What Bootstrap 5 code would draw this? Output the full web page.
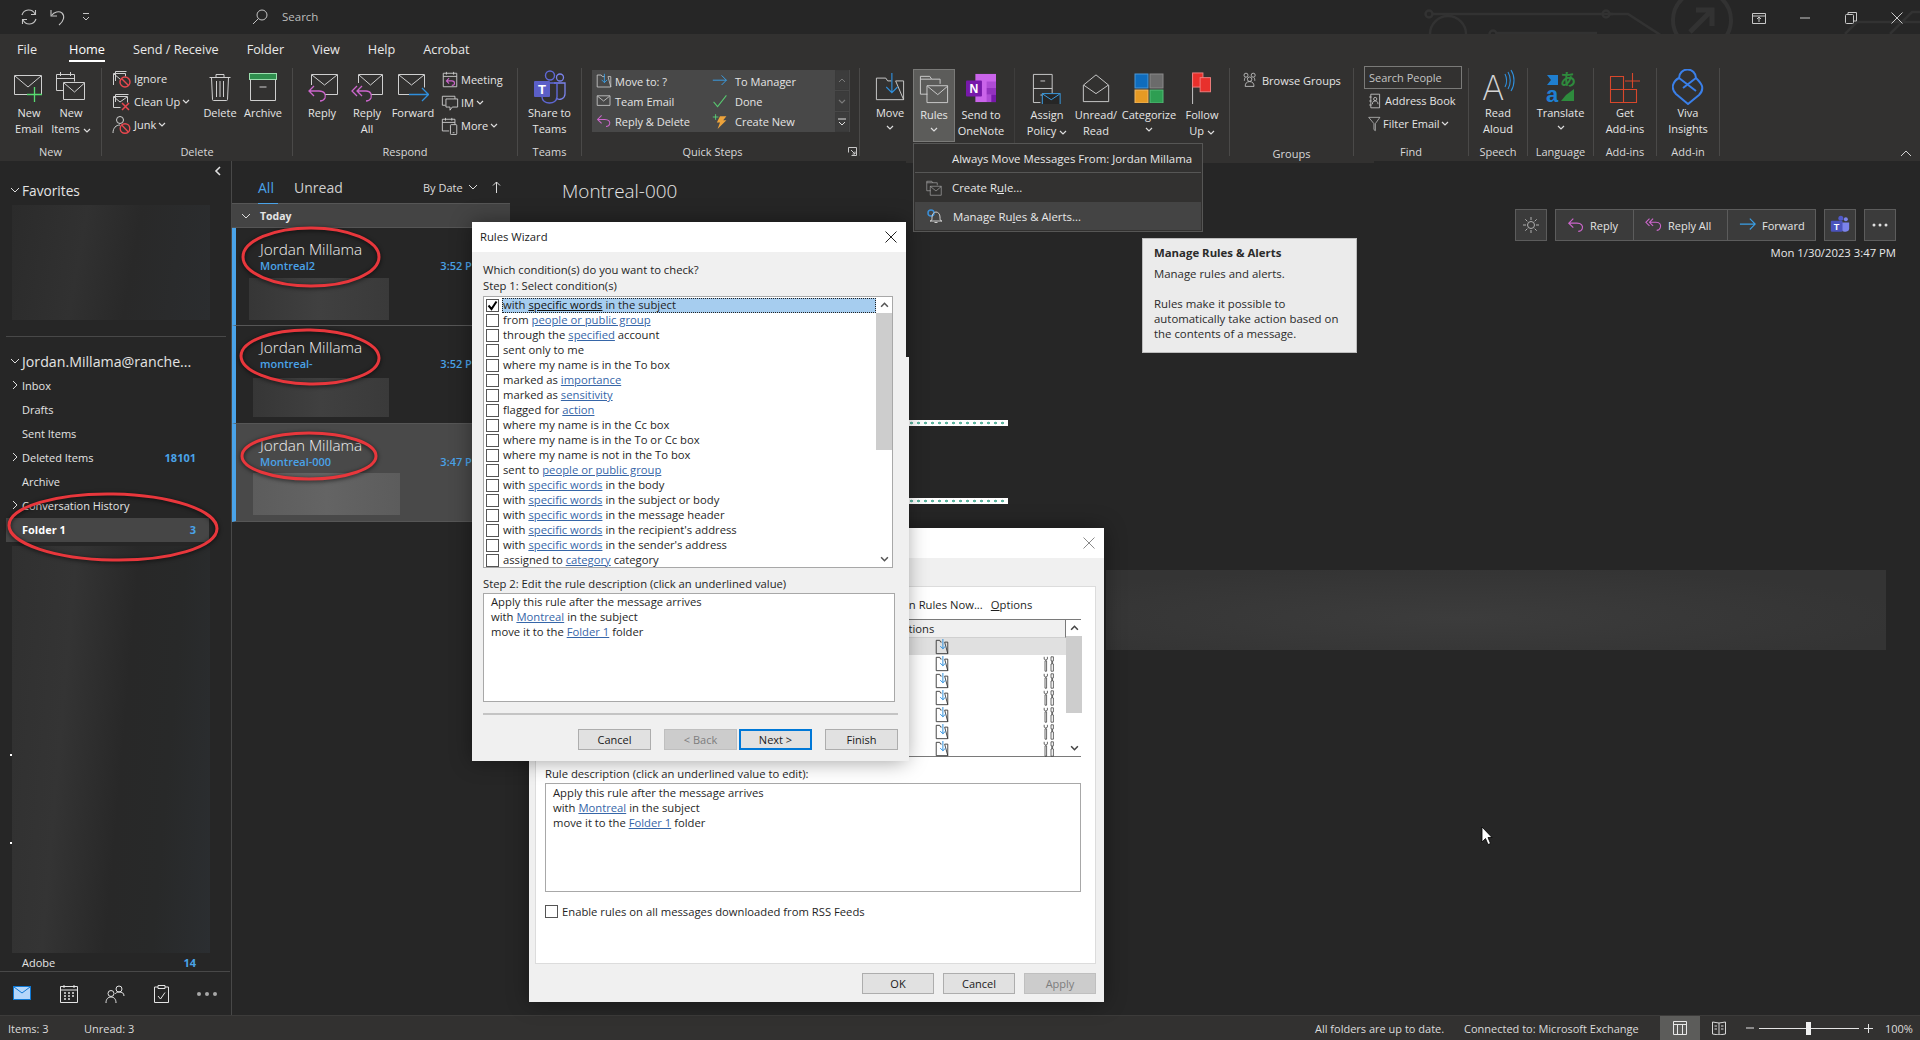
<!DOCTYPE html>
<html lang="en">
<head>
<meta charset="UTF-8">
<title>Outlook Rules Wizard</title>
<link rel="stylesheet" href="https://cdn.jsdelivr.net/npm/bootstrap@5.3.0/dist/css/bootstrap.min.css">
<style>
    html, body { height: 100%; overflow: hidden; }
    body { background: #262626; color: #e4e4e4; font-family: "Open Sans", "Liberation Sans", sans-serif; font-size: 11px; line-height: 15px; }
    .app { width: 1920px; height: 1040px; position: relative; overflow: hidden; }

    /* title bar */
    .titlebar { height: 34px; background: #262626; position: relative; flex: none; padding-bottom: 1px; }
    .circuit { position: absolute; left: 1420px; top: 0; }
    .tb-refresh { margin-left: 20px; }
    .tb-undo { margin-left: 11px; }
    .tb-drop { margin-left: 14px; }
    .tb-lens { margin-left: 160px; }
    .tb-search { width: 60px; margin-left: 13px; color: #bdbdbd; font-size: 11.5px; }
    .winctl { width: 46px; text-align: center; }

    /* ribbon */
    .ribbon { height: 127px; background: #323130; flex: none; position: relative; }
    .tabs { height: 32px; padding-left: 17px; gap: 28px; font-size: 12.7px; color: #e8e8e8; }
    .tabs span { height: 32px; line-height: 30px; }
    .tab-file { margin-right: 4px; }
    .tab-on { color: #fff; position: relative; }
    .tab-on::after { content: ""; position: absolute; left: 0; right: 0; top: 26px; height: 2px; background: #fff; }
    .rowgroups { height: 88px; margin-top: 2px; }
    .rgroup { height: 88px; border-right: 1px solid #4a4948; flex: none; }
    .rlabel { height: 20px; line-height: 20px; margin-bottom: -6px; margin-top: auto; text-align: center; color: #d8d8d8; flex: none; }
    .rbody { height: 72px; flex: none; }
    .g-new { width: 102px; }
    .g-new .rbody { padding-left: 8px; }
    .g-del { width: 191px; }
    .g-del .rbody { padding-left: 10px; }
    .g-resp { width: 225px; }
    .g-resp .rbody { padding-left: 9px; }
    .g-teams { width: 64px; }
    .g-qs { width: 278px; }
    .g-qs .rbody { padding-left: 10px; }
    .g-move { width: 155px; border-right-color: #3e3d3c; }
    .g-move .rbody { padding-left: 8px; }
    .g-tags { width: 215px; }
    .g-tags .rbody { padding-left: 7px; }
    .g-grp { width: 124px; }
    .g-find { width: 115px; }
    .g-find .rbody { padding-left: 10px; }
    .g-speech { width: 59px; }
    .g-lang { width: 66px; }
    .g-addins { width: 63px; }
    .g-addin { width: 63px; }
    .bigb { display: flex; flex-direction: column; align-items: center; text-align: center; flex: none; line-height: 16px; color: #e6e6e6; }
    .bigb .ic { height: 37px; display: flex; align-items: center; justify-content: center; flex: none; }
    .bigb.lower .ic { height: 39px; }
    .w36 { width: 36px; } .w40 { width: 40px; } .w42 { width: 42px; } .w44 { width: 44px; }
    .w48 { width: 48px; } .w50 { width: 50px; } .w52 { width: 52px; } .w58 { width: 58px; } .wfull { width: 100%; }
    .smallcol { flex: none; }
    .smallcol > div { height: 23px; display: flex; align-items: center; gap: 2px; white-space: nowrap; color: #e6e6e6; }
    .col-del { width: 90px; margin-top: -1px; }
    .col-resp { margin-left: 7px; width: 76px; }
    .chev { flex: none; }
    .rules-on { margin-left: 1px; height: 73px; background: #5c5c5a; border: 1px solid #7a7a78; margin-top: 1px; }
    .bigb.rules-on .ic { height: 37px; }
    .qs-gal { width: 258px; height: 62px; background: #484848; margin-top: 2px; position: relative; }
    .qs-col { width: 119px; padding-top: 1px; }
    .qs-col2 { width: 119px; padding-top: 1px; }
    .qs-col > div, .qs-col2 > div { height: 20px; display: flex; align-items: center; gap: 3px; white-space: nowrap; }
    .qs-col > div { padding-left: 4px; }
    .qs-col2 > div { gap: 6px; }
    .qs-scroll { width: 14px; margin-left: 5px; gap: 1px; }
    .qs-scroll > div { flex: 1; background: #3c3c3c; border: 1px solid #3a3a3a; display: flex; align-items: center; justify-content: center; }
    .qs-label { padding-right: 16px; position: relative; }
    .launcher { position: absolute; right: 2px; top: 5px; }
    .browse { margin-top: 4px; gap: 4px; white-space: nowrap; padding-left: 12px; }
    .grp-label { margin-top: auto; margin-bottom: -8px; }
    .ppl { width: 98px; height: 21px; border: 1px solid #7a7a78; color: #c4c4c4; padding-left: 3px; line-height: 18px; margin-top: -2px; white-space: nowrap; }
    .find-rows > div { height: 23px; display: flex; align-items: center; gap: 1px; white-space: nowrap; padding-left: 4px; }
    .ribcollapse { margin-left: auto; margin-right: 8px; margin-top: 82px; }
    .ribbon-lip { position: absolute; left: 906px; top: 127px; width: 468px; height: 2px; background: #323130; z-index: 3; }

    /* rules dropdown and tooltip */
    .rules-menu { position: absolute; left: 913px; top: 143px; width: 290px; height: 89px; background: #323130; border: 1px solid #565655; z-index: 6; color: #e8e8e8; font-size: 11.4px; }
    .rules-menu .mi { display: flex; align-items: center; padding-left: 38px; }
    .mi svg { margin-left: -26px; margin-right: 10px; flex: none; }
    .mi-a { height: 29px; border-bottom: 1px solid #565655; margin: 0 1px; padding-left: 37px !important; }
    .mi-b { height: 29px; }
    .mi-c { height: 28px; background: #444; margin: 0 1px; }
    .tip { position: absolute; left: 1142px; top: 238px; width: 215px; height: 115px; background: #ebebeb; border: 1px solid #bdbdbd; color: #2a2a2a; padding: 6px 11px; z-index: 6; font-size: 11.4px; }
    .tip b { font-weight: 700; display: block; margin-bottom: 6px; }
    .tip p { margin: 0 0 15px; }

    /* main panes */
    .mainrow { flex: 1 1 auto; min-height: 0; position: relative; }
    .sidebar { width: 231px; flex: none; }
    .collapse-row { height: 20px; padding-right: 10px; }
    .fav-row { height: 20px; font-size: 13.7px; padding: 0 0 2px 22px; }
    .fav-row svg, .acct-row svg { margin-left: -12px; margin-right: 2px; flex: none; }
    .frow svg { margin-left: -10px; margin-right: 4px; flex: none; }
    .blur1 { height: 115px; margin: 4px 21px 0 12px; background: linear-gradient(100deg, #2b2b2b 0, #313131 35%, #292929 60%, #2b2d2f 100%); }
    .sidehr { height: 1px; background: #484848; margin: 16px 5px 13px 6px; }
    .acct-row { height: 24px; font-size: 14.2px; padding: 0 0 2px 22px; white-space: nowrap; }
    .frow { height: 24px; margin-left: 6px; width: 203px; padding: 0 13px 2px 16px; justify-content: space-between; font-size: 11px; }
    .frow-on { background: #464646; font-weight: 700; color: #fff; }
    .cnt { color: #4aa3e8; font-weight: 700; }
    .blur2 { height: 407px; margin: 4px 21px 0 12px; background: linear-gradient(95deg, #303030 0, #343434 28%, #282828 55%, #282929 75%, #2b2e31 100%); }
    .adobe-row { height: 18px; padding: 2px 35px 0 22px; justify-content: space-between; }
    .navbar-bottom { height: 44px; border-top: 1px solid #484848; margin-right: 1px; }
    .navbar-bottom > div { width: 46px; display: flex; justify-content: center; align-items: center; }

    .msglist { width: 279px; flex: none; border-left: 1px solid #484848; }
    .listhead { height: 43px; border-bottom: 1px solid #565656; padding: 10px 0 0 26px; position: relative; }
    .lt-all { color: #4aa3e8; font-size: 14px; position: relative; width: 36px; }
    .lt-all::after { content: ""; position: absolute; left: 0; width: 20px; top: 23px; height: 1px; background: #4aa3e8; }
    .lt-unread { font-size: 14px; color: #cfcfcf; width: 129px; }
    .lt-sort { color: #dcdcdc; width: 40px; white-space: nowrap; font-size: 11px; }
    .lt-caret { margin-left: 5px; }
    .lt-up { margin-left: 14px; }
    .today { height: 24px; background: #444; font-weight: 700; font-size: 10.5px; padding: 1px 0 0 9px; gap: 9px; border-bottom: 1px solid #555; }
    .mitem { height: 98px; border-left: 4px solid #4aa3e8; border-bottom: 1px solid #565656; padding: 11px 28px 0 24px; }
    .mitem-on { background: #494949; }
    .mname { font-size: 15.3px; line-height: 20px; color: #f0f0f0; font-weight: 300; }
    .msub { line-height: 14px; justify-content: space-between; color: #4aa3e8; font-weight: 600; }
    .mtime { font-weight: 600; }
    .mblur { background: linear-gradient(90deg, #363636, #404040 50%, #3a3a3a); }
    .mb1 { margin: 5px 0 0 -11px; width: 140px; height: 42px; }
    .mb2 { margin: 7px 0 0 -7px; width: 136px; height: 39px; }
    .mb3 { margin: 4px 0 0 -7px; width: 147px; height: 42px; background: linear-gradient(90deg, #5c5c5c, #646464 50%, #5c5c5c); }

    .reading { flex: 1 1 auto; min-width: 0; position: relative; }
    .subject { padding: 18px 0 0 52px; font-size: 18.9px; line-height: 24px; color: #e6e6e6; font-weight: 300; height: 48px; }
    .actions { height: 32px; padding-right: 24px; gap: 8px; justify-content: flex-end; }
    .actbtn { background: #3b3b3b; border: 1px solid #5c5c5c; height: 32px; display: flex; align-items: center; justify-content: center; }
    .actsq { width: 32px; }
    .actgrp { width: 261px; }
    .actgrp > div { display: flex; align-items: center; height: 30px; gap: 5px; color: #e4e4e4; padding-left: 11px; }
    .actgrp > div + div { border-left: 1px solid #5c5c5c; }
    .ag-r { width: 77px; } .ag-ra { width: 94px; } .ag-f { width: 88px; }
    .datel { text-align: right; padding: 4px 24px 0 0; line-height: 16px; height: 20px; color: #e8e8e8; font-size: 11.3px; }
    .strip { height: 6px; width: 198px; background: #fff radial-gradient(circle at 3.5px 3px, #5fb5a0 1.2px, transparent 1.6px) 0 0 / 7px 6px; margin-left: 300px; }
    .st1 { margin-top: 159px; }
    .st2 { margin-top: 72px; }
    .rbar { margin: 66px 0 0 596px; width: 780px; height: 80px; background: radial-gradient(ellipse at 45% 60%, #3c3c3c, #343434 75%); }

    /* status bar */
    .statusbar { height: 25px; background: #323130; flex: none; font-size: 11px; color: #dcdcdc; border-top: 1px solid #3c3b3a; }
    .sb-items { margin-left: 8px; width: 76px; }
    .sb-up { margin-left: auto; width: 149px; white-space: nowrap; }
    .sb-conn { width: 196px; white-space: nowrap; }
    .sb-view { width: 40px; height: 24px; background: #5c5c5a; display: flex; align-items: center; justify-content: center; }
    .sb-read { width: 38px; display: flex; justify-content: center; }
    .sb-zoom { width: 147px; gap: 5px; padding-left: 8px; }
    .zline { width: 100px; height: 1px; background: #e4e4e4; position: relative; }
    .zthumb { position: absolute; left: 47px; top: -6px; width: 5px; height: 13px; background: #f0f0f0; }
    .sb-pct { width: 35px; }

    /* windows dialogs */
    .dlg { position: absolute; background: #f0f0f0; color: #1f1f1f; font-size: 11.25px; line-height: 15px; box-shadow: 0 0 20px rgba(0, 0, 0, .4); }
    .dlg a { color: #3666a8; text-decoration: underline; }
    .dlg-title { height: 30px; background: #fff; padding: 0 9px 1px 8px; justify-content: space-between; color: #1a1a1a; }
    .wizard { left: 472px; top: 222px; width: 434px; height: 539px; z-index: 5; }
    .wizard::after { content: ""; position: absolute; left: 100%; top: 135px; bottom: 0; width: 3px; background: #f0f0f0; }
    .wiz-body { padding: 10px 11px 0; }
    .lh16 { line-height: 16px; }
    .mt-1px { margin-top: 1px; }
    .condbox { width: 410px; height: 272px; border: 1px solid #a8a8a8; background: #fff; margin-top: 2px; }
    .condrows { width: 392px; padding-top: 1px; flex: none; }
    .cond { height: 15px; display: flex; align-items: center; padding-left: 2px; white-space: nowrap; }
    .tick { width: 13px; height: 13px; border: 1px solid #555; background: #fff; flex: none; display: flex; align-items: center; justify-content: center; }
    .cond span { margin-left: 3px; padding: 0 1px; flex: 1; height: 15px; line-height: 14px; }
    .cond-on span { background: #a6cdef; outline: 1px dotted #222; outline-offset: -1px; }
    .cond-on a { color: #111; }
    .scrollb { width: 16px; flex: none; display: flex; flex-direction: column; background: #fff; }
    .sb-arrow { height: 16px; display: flex; align-items: center; justify-content: center; flex: none; }
    .thumb-a { height: 137px; background: #cdcdcd; flex: none; }
    .descbox { height: 109px; border: 1px solid #a8a8a8; background: #fff; padding: 0 7px; }
    .descbox div { height: 15px; }
    .wiz-sep { height: 2px; background: #c4c4c4; margin-top: 11px; width: 415px; }
    .btnrow { margin-top: 14px; width: 415px; justify-content: flex-end; }
    .btn.wbtn { width: 73px; height: 21px; padding: 0; border-radius: 0; background: #e1e1e1; border: 1px solid #adadad; color: #1a1a1a; font-size: 11px; line-height: 18px; }
    .btn.wbtn-off { background: #cccccc; border-color: #bfbfbf; color: #7d7d7d; }
    .btn.wbtn-def { border: 2px solid #0078d7; }
    .gap13 { margin-left: 13px !important; }
    .gap2 { margin-left: 2px !important; }
    .gap9 { margin-left: 9px !important; }

    .rulesdlg { left: 529px; top: 528px; width: 575px; height: 474px; z-index: 4; }
    .rd-panel { width: 561px; height: 378px; margin: 28px 0 0 6px; background: #fff; border: 1px solid #dcdcdc; padding: 10px 0 0 9px; }
    .rd-tools { height: 16px; line-height: 16px; white-space: nowrap; }
    .rd-run { margin-left: 350px; margin-right: 8px; }
    .rulelist { width: 536px; height: 138px; border: 1px solid #7a7a7a; margin-top: 6px; }
    .rl-main { width: 520px; flex: none; }
    .rl-head { height: 18px; background: #f0f0f0; border-bottom: 1px solid #d0d0d0; padding-left: 350px; line-height: 17px; border-right: 1px solid #7a7a7a; }
    .rl-row { height: 17px; display: flex; align-items: center; padding-left: 388px; overflow: hidden; }
    .rl-sel { background: #e0e0e0; }
    .rl-tool { margin-left: 92px; flex: none; }
    .thumb-b { height: 77px; background: #cdcdcd; flex: none; }
    .rd-lab { margin-top: 9px; line-height: 16px; }
    .rd-desc { width: 536px; margin-top: 1px; padding-top: 1px; }
    .rd-check { margin-top: 11px; height: 16px; gap: 4px; }
    .rd-btns { margin-top: 9px; padding-right: 8px; justify-content: flex-end; }
    .btn.wbtn-b { width: 72px; }

    .rings { position: absolute; left: 0; top: 0; z-index: 4; pointer-events: none; filter: drop-shadow(0 1px 2px rgba(0, 0, 0, .7)); }
    .mouse { position: absolute; left: 1481px; top: 826px; z-index: 7; }
    .speck { position: absolute; left: 10px; width: 2px; height: 2px; background: #fff; }
    .speck1 { top: 754px; } .speck2 { top: 842px; }
</style>
</head>
<body>

<svg width="0" height="0" class="d-block position-absolute">
<defs>
  <symbol id="i-newmail" viewBox="0 0 32 32" fill="none" stroke="#cfcfcf"><path d="M1.500 4.500h27v19h-27zM2 5l13 11L28 5"/><path d="M14 23.500h15M21.500 16v15" stroke="#58dc70" stroke-width="1.300"/></symbol>
  <symbol id="i-newitems" viewBox="0 0 32 32" fill="none" stroke="#cfcfcf"><path d="M8 19.500H1.500v-16h18v7M1.500 7.500h18M5.500 1v4M15.500 1v4"/><path d="M8.500 11.500h21v17h-21zM9 12l10.500 9 10-9"/></symbol>
  <symbol id="i-ignore" viewBox="0 0 20 20" fill="none" stroke="#cfcfcf"><path d="M3.500 12V2.500h11M1.500 16V4.500h12v3"/><path d="M2 5l6 5"/><circle cx="13" cy="13" r="5" stroke="#e8484f" stroke-width="1.400"/><path d="M9.500 9.500l7 7" stroke="#e8484f" stroke-width="1.400"/></symbol>
  <symbol id="i-cleanup" viewBox="0 0 20 20" fill="none" stroke="#cfcfcf"><path d="M3.500 10V2.500h13M1.500 15.500v-11h14v6M1.500 15.500h7M2 5l6 5 7-5"/><path d="M10 11l7 7M17 11l-7 7" stroke="#e8484f" stroke-width="1.500"/></symbol>
  <symbol id="i-junk" viewBox="0 0 20 20" fill="none" stroke="#cfcfcf"><circle cx="8" cy="5" r="3.500"/><path d="M1 18c0-5 3-8 7-8"/><circle cx="13" cy="13.500" r="4.800" stroke="#e8484f" stroke-width="1.400"/><path d="M9.700 10l6.600 7" stroke="#e8484f" stroke-width="1.400"/></symbol>
  <symbol id="i-trash" viewBox="0 0 32 32" fill="none" stroke="#cfcfcf"><path d="M5.500 6.500h21M12 6V3.500h8V6M7.500 6.500l1 22a1 1 0 0 0 1 1h13a1 1 0 0 0 1-1l1-22M12.500 10v16M16 10v16M19.500 10v16"/></symbol>
  <symbol id="i-archive" viewBox="0 0 32 32" fill="none"><rect x="2.500" y="2.500" width="27" height="6" fill="#2f8f4e" stroke="#9adfae"/><path d="M3.500 8.500v21h25v-21M12.500 16h7" stroke="#cfcfcf"/></symbol>
  <symbol id="i-reply" viewBox="0 0 32 32" fill="none"><path d="M5.500 14V3.500h26v20H19M6 4l12.500 10L31 4" stroke="#cfcfcf"/><path d="M8 15l-5 5 5 5M3 20h10c6 0 7 4 6 7-1 2-3 3-5 3" stroke="#cc66cc" stroke-width="1.300"/></symbol>
  <symbol id="i-replyall" viewBox="0 0 32 32" fill="none"><path d="M7.500 12V3.500h24v20H20M8 4l11.500 10L31 4" stroke="#cfcfcf"/><path d="M6 15l-5 5 5 5M11 15l-5 5 5 5M6 20h9c5 0 6 4 5 7-1 2-3 3-5 3" stroke="#cc66cc" stroke-width="1.300"/></symbol>
  <symbol id="i-forward" viewBox="0 0 32 32" fill="none"><path d="M12 23.500H1.500v-20h26v13M2 4l12.500 10L27 4" stroke="#cfcfcf"/><path d="M12 23.500h19M25 17l6.500 6.500L25 30" stroke="#2f8fdc" stroke-width="1.300"/></symbol>
  <symbol id="i-meeting" viewBox="0 0 20 20" fill="none"><path d="M2.500 2.500h15v15h-15zM2.500 6h15M6 1v3M14 1v3" stroke="#cfcfcf"/><path d="M9 8l-3 3 3 3M6 11h6c2 0 3 1 3 2.500S13.500 16 12 16" stroke="#cc66cc" stroke-width="1.200"/></symbol>
  <symbol id="i-im" viewBox="0 0 20 20" fill="none" stroke="#cfcfcf"><path d="M5 12.500H1.500v-10h14v3"/><path d="M5.500 5.500h13v9h-6L10 18v-3.500H5.500z"/></symbol>
  <symbol id="i-more" viewBox="0 0 20 20" fill="none" stroke="#cfcfcf"><path d="M9 15.500H1.500v-13h14v6M1.500 6h14M5 1v3M12 1v3"/><rect x="10.500" y="8.500" width="7" height="11" rx=".8"/><path d="M13 17.500h2"/></symbol>
  <symbol id="i-moveto" viewBox="0 0 20 20" fill="none"><path d="M1.500 17.500v-15h5l1.500 2h3M15 4.500h3.500v13z" stroke="#cfcfcf"/><path d="M1.500 17.500h17" stroke="#cfcfcf"/><path d="M10.500 1v11M7 8.500l3.500 3.500L14 8.500" stroke="#3aa0e8" stroke-width="1.100"/></symbol>
  <symbol id="i-env" viewBox="0 0 20 20" fill="none" stroke="#cfcfcf"><path d="M1.500 3.500h16v12h-16zM2 4l7.500 6L17 4"/></symbol>
  <symbol id="i-replysm" viewBox="0 0 20 20" fill="none" stroke="#cc66cc" stroke-width="1.300"><path d="M7 3L2 8l5 5M2 8h9c5 0 7 3 6 6-.6 2-2.500 3-4.500 3"/></symbol>
  <symbol id="i-forwardsm" viewBox="0 0 20 20" fill="none" stroke="#3aa0e8" stroke-width="1.200"><path d="M1 9h17M12 3l6 6-6 6"/></symbol>
  <symbol id="i-check" viewBox="0 0 20 20" fill="none" stroke="#58c870" stroke-width="1.300"><path d="M2 11l5 6L18 3"/></symbol>
  <symbol id="i-bolt" viewBox="0 0 20 20"><path d="M10 4h8l-4 5h4L7 20l3-8H6z" fill="#eda33b"/><path d="M1 5h7M4.500 1.500v7" stroke="#5ce07c" fill="none"/></symbol>
  <symbol id="i-move" viewBox="0 0 32 32" fill="none"><path d="M1.500 29.500v-23h10l2 3h4M22 9.500h8.500v20z" stroke="#cfcfcf"/><path d="M1.500 29.500h29" stroke="#cfcfcf"/><path d="M18 1v21M12 16l6 6 6-6" stroke="#2f8fdc" stroke-width="1.200"/></symbol>
  <symbol id="i-rules" viewBox="0 0 32 32" fill="none" stroke="#cfcfcf"><path d="M9 21.500H1.500v-19h10l2 3h9v5M1.500 5.500h12"/><path d="M8.500 12.500h22v18h-22zM9 13l11 9 10.500-9"/></symbol>
  <symbol id="i-policy" viewBox="0 0 32 32" fill="none"><path d="M9 31.500H1.500v-30h20v20M1.500 16.500h20M9 8.500h5M9 23.500h5" stroke="#cfcfcf"/><rect x="11" y="22" width="19" height="13" fill="#262626" stroke="#3aa0e8"/><path d="M11.500 22.500l9 6 9-6" stroke="#3aa0e8"/></symbol>
  <symbol id="i-unread" viewBox="0 0 32 32" fill="none" stroke="#cfcfcf"><path d="M2.500 13v17.500h27V13L16 2zM3 13l13 9 13-9"/></symbol>
  <symbol id="i-cat" viewBox="0 0 30 30"><rect x="1" y="1" width="13" height="14" fill="#0f6cbd" stroke="#4a98d8"/><rect x="16" y="1" width="13" height="14" fill="#6b6b6b" stroke="#8a8a8a"/><rect x="1" y="17" width="13" height="13" fill="#e69a24" stroke="#f0b864"/><rect x="16" y="17" width="13" height="13" fill="#2e9e52" stroke="#55bb77"/></symbol>
  <symbol id="i-flag" viewBox="0 0 30 34" fill="none"><path d="M5 2v32" stroke="#cfcfcf"/><rect x="5" y="1" width="11" height="15" fill="#e8302c" stroke="#f08080"/><rect x="13" y="6" width="11" height="15" fill="#e8302c" stroke="#f08080"/></symbol>
  <symbol id="i-people" viewBox="0 0 20 20" fill="none" stroke="#cfcfcf"><circle cx="5" cy="4" r="2.500"/><circle cx="14" cy="4" r="2.500"/><circle cx="9.500" cy="9" r="2.800"/><path d="M3 11c0-1 0-3 1-4M16 11c0-1 0-3-1-4M4 18c0-4 2-6 5.500-6s5.500 2 5.500 6z"/></symbol>
  <symbol id="i-book" viewBox="0 0 20 20" fill="none" stroke="#cfcfcf"><path d="M3.500 1.500h11v17h-11zM1.500 5h3M1.500 10h3M1.500 15h3"/><circle cx="9" cy="7.500" r="2"/><path d="M5.500 14c0-3 1.500-4 3.500-4s3.500 1 3.500 4"/></symbol>
  <symbol id="i-filter" viewBox="0 0 20 22" fill="none" stroke="#cfcfcf"><path d="M1 1.500h16l-6.500 9v10l-2-1.500v-8.500z"/></symbol>
  <symbol id="i-addins" viewBox="0 0 32 36" fill="none"><path d="M1.500 7.500h13v13h13v13h-26zM1.500 20.500h13v13" stroke="#d8472b" stroke-width="1.100"/><path d="M16 12h15M23.500 4v15" stroke="#d8472b" stroke-width="1.100"/></symbol>
  <symbol id="i-viva" viewBox="0 0 32 36" fill="none" stroke="#3a7fe8" stroke-width="2"><path d="M7 9a8.500 8.500 0 0 1 17 0c1 1 5 5 6 8 1 4-1 7-3 9l-11 9L4 25c-2-2-4-5-3-9 1-3 4-6 6-7z"/><path d="M7 9l17 13M24 9L11 19"/></symbol>
  <symbol id="i-wrench" viewBox="0 0 16 20" fill="none" stroke="#444"><path d="M2 1v3l2 1 2-1V1M3 6h2v13H3zM10.500 1h3v5h-1v4h1v9h-3v-9h1V6h-1z"/></symbol>
  <symbol id="i-movesm" viewBox="0 0 16 18" fill="none"><path d="M1.500 16.500v-15h4l1 2h1M11 3.500h3.500v13z" stroke="#333"/><path d="M1.500 16.500h13" stroke="#333"/><path d="M9 0v11M6 8l3 3 3-3" stroke="#2f8fdc" stroke-width="1.100"/></symbol>
  <symbol id="c-down" viewBox="0 0 8 5" fill="none" stroke-width="1.200"><path d="M1 1l3 3 3-3"/></symbol>
</defs>
</svg>

<div class="app d-flex flex-column">

  <div class="titlebar d-flex align-items-center">
    <svg class="circuit" width="500" height="34" fill="none" stroke="#323232" stroke-width="2.500"><circle cx="9" cy="14" r="3.500"/><path d="M13 14h180"/><circle cx="186" cy="14" r="3.500"/><path d="M190 14h18l34 22"/><path d="M10 34a18 18 0 0 1 36 0"/><circle cx="73" cy="34" r="3.500"/><path d="M77 33h100"/><circle cx="282" cy="20" r="29" stroke-width="4"/><path d="M270 32l22-22M276 10h16v16" stroke-width="5"/><path d="M425 34l12-12h83M470 34l22-22h30"/></svg>
    <svg class="tb-refresh" width="18" height="18" viewBox="0 0 18 18" fill="none" stroke="#c4c4c4" stroke-width="1.100"><path d="M2 7a7 7 0 0 1 13-1M16 11a7 7 0 0 1-13 1"/><path d="M15.500 2v4.500H11M2.500 16v-4.500H7"/></svg>
    <svg class="tb-undo" width="18" height="18" viewBox="0 0 18 18" fill="none" stroke="#c4c4c4" stroke-width="1.100"><path d="M2 2v6h6"/><path d="M2.500 7.500C5 4 10 2.500 13 5c3 3 2 8-3 12"/></svg>
    <svg class="tb-drop" width="10" height="10" viewBox="0 0 10 10" fill="none" stroke="#c4c4c4"><path d="M2 1.500h6M2 5l3 3 3-3"/></svg>
    <svg class="tb-lens" width="18" height="18" viewBox="0 0 18 18" fill="none" stroke="#c4c4c4"><circle cx="11" cy="7" r="5"/><path d="M7.500 10.500L2 16"/></svg>
    <span class="tb-search">Search</span>
    <div class="ms-auto d-flex position-relative">
      <div class="winctl"><svg width="14" height="14" viewBox="0 0 14 14" fill="none" stroke="#c8c8c8"><path d="M.5 2.500h13v10H.5zM.5 5h13M7 11V6.500M5 8l2-2 2 2"/></svg></div>
      <div class="winctl"><svg width="12" height="12" viewBox="0 0 12 12" stroke="#c8c8c8"><path d="M1 6h10"/></svg></div>
      <div class="winctl"><svg width="12" height="12" viewBox="0 0 12 12" fill="none" stroke="#c8c8c8"><rect x=".5" y="2.500" width="8" height="9" rx="1"/><path d="M3 2.500V.5h8.500V9H8.500"/></svg></div>
      <div class="winctl"><svg width="12" height="12" viewBox="0 0 12 12" stroke="#c8c8c8"><path d="M.5.500l11 11M11.500.5l-11 11"/></svg></div>
    </div>
  </div>

  <div class="ribbon">
    <div class="tabs d-flex">
      <span class="tab-file">File</span><span class="tab-on">Home</span><span>Send / Receive</span><span>Folder</span><span>View</span><span>Help</span><span>Acrobat</span>
    </div>
    <div class="rowgroups d-flex">

      <div class="rgroup g-new d-flex flex-column">
        <div class="rbody d-flex">
          <div class="bigb w42"><div class="ic"><svg width="32" height="32"><use href="#i-newmail"/></svg></div>New<br>Email</div>
          <div class="bigb w42"><div class="ic"><svg width="32" height="32"><use href="#i-newitems"/></svg></div>New<br><span>Items <svg class="chev" width="8" height="5" stroke="#ddd"><use href="#c-down"/></svg></span></div>
        </div>
        <div class="rlabel">New</div>
      </div>

      <div class="rgroup g-del d-flex flex-column">
        <div class="rbody d-flex">
          <div class="smallcol col-del d-flex flex-column">
            <div><svg width="20" height="20"><use href="#i-ignore"/></svg>Ignore</div>
            <div><svg width="20" height="20"><use href="#i-cleanup"/></svg>Clean Up <svg class="chev" width="8" height="5" stroke="#ddd"><use href="#c-down"/></svg></div>
            <div><svg width="20" height="20"><use href="#i-junk"/></svg>Junk <svg class="chev" width="8" height="5" stroke="#ddd"><use href="#c-down"/></svg></div>
          </div>
          <div class="bigb w36"><div class="ic"><svg width="32" height="32"><use href="#i-trash"/></svg></div>Delete</div>
          <div class="bigb w50"><div class="ic"><svg width="32" height="32"><use href="#i-archive"/></svg></div>Archive</div>
        </div>
        <div class="rlabel">Delete</div>
      </div>

      <div class="rgroup g-resp d-flex flex-column">
        <div class="rbody d-flex">
          <div class="bigb w40"><div class="ic"><svg width="32" height="32"><use href="#i-reply"/></svg></div>Reply</div>
          <div class="bigb w50"><div class="ic"><svg width="32" height="32"><use href="#i-replyall"/></svg></div>Reply<br>All</div>
          <div class="bigb w42"><div class="ic"><svg width="32" height="32"><use href="#i-forward"/></svg></div>Forward</div>
          <div class="smallcol col-resp d-flex flex-column">
            <div><svg width="18" height="18"><use href="#i-meeting"/></svg>Meeting</div>
            <div><svg width="18" height="18"><use href="#i-im"/></svg>IM <svg class="chev" width="8" height="5" stroke="#ddd"><use href="#c-down"/></svg></div>
            <div><svg width="18" height="18"><use href="#i-more"/></svg>More <svg class="chev" width="8" height="5" stroke="#ddd"><use href="#c-down"/></svg></div>
          </div>
        </div>
        <div class="rlabel">Respond</div>
      </div>

      <div class="rgroup g-teams d-flex flex-column">
        <div class="rbody d-flex">
          <div class="bigb wfull"><div class="ic"><svg width="34" height="34" viewBox="0 0 34 34"><circle cx="27" cy="7.500" r="3.500" fill="none" stroke="#7b83eb" stroke-width="1.300"/><circle cx="17" cy="5.500" r="4.500" fill="none" stroke="#5f68d6" stroke-width="1.400"/><path d="M21 13h11v11a5.500 5.500 0 0 1-9 4" fill="none" stroke="#7b83eb" stroke-width="1.300"/><path d="M9 13h15v14c0 8-15 8-15 0z" fill="none" stroke="#5f68d6" stroke-width="1.400"/><rect x="1" y="11" width="16" height="16" rx="1" fill="#5b5fc7"/><text x="9" y="24" font-size="13" font-family="Liberation Sans" font-weight="700" fill="#fff" text-anchor="middle">T</text></svg></div>Share to<br>Teams</div>
        </div>
        <div class="rlabel">Teams</div>
      </div>

      <div class="rgroup g-qs d-flex flex-column">
        <div class="rbody">
          <div class="qs-gal d-flex">
            <div class="qs-col d-flex flex-column">
              <div><svg width="16" height="16"><use href="#i-moveto"/></svg>Move to: ?</div>
              <div><svg width="16" height="16"><use href="#i-env"/></svg>Team Email</div>
              <div><svg width="16" height="16"><use href="#i-replysm"/></svg>Reply &amp; Delete</div>
            </div>
            <div class="qs-col2 d-flex flex-column">
              <div><svg width="18" height="16"><use href="#i-forwardsm"/></svg>To Manager</div>
              <div><svg width="18" height="16"><use href="#i-check"/></svg>Done</div>
              <div><svg width="18" height="16"><use href="#i-bolt"/></svg>Create New</div>
            </div>
            <div class="qs-scroll d-flex flex-column">
              <div><svg width="8" height="5" viewBox="0 0 8 5" fill="none" stroke="#7a7a7a"><path d="M1 4l3-3 3 3"/></svg></div>
              <div><svg width="8" height="5" stroke="#7a7a7a"><use href="#c-down"/></svg></div>
              <div><svg width="8" height="8" viewBox="0 0 8 8" fill="none" stroke="#ddd"><path d="M0 1h8M1 4l3 3 3-3"/></svg></div>
            </div>
          </div>
        </div>
        <div class="rlabel qs-label">Quick Steps<svg class="launcher" width="9" height="9" viewBox="0 0 9 9" fill="none" stroke="#c8c8c8"><path d="M.5 5.500v-5h8v8h-5M3 3l4 4M4.500 7H7V4.500"/></svg></div>
      </div>

      <div class="rgroup g-move d-flex flex-column">
        <div class="rbody d-flex">
          <div class="bigb w44"><div class="ic"><svg width="30" height="32"><use href="#i-move"/></svg></div>Move<br><svg class="mt-1" width="8" height="5" stroke="#ddd"><use href="#c-down"/></svg></div>
          <div class="bigb w42 rules-on"><div class="ic"><svg width="30" height="32"><use href="#i-rules"/></svg></div>Rules<svg class="mt-1" width="8" height="5" stroke="#ddd"><use href="#c-down"/></svg></div>
          <div class="bigb w52 lower"><div class="ic"><svg width="30" height="30" viewBox="0 0 32 32"><rect x="10" y="1" width="22" height="30" fill="#ca64ea"/><path d="M22 9h10v7H22zM22 23h10v8H22z" fill="#ae4bd5"/><path d="M22 16h10v7H22z" fill="#9332bf"/><path d="M27 23h5v8h-5z" fill="#7719aa"/><rect x="0" y="8" width="17" height="17" rx="1" fill="#7719aa"/><text x="8.500" y="21" font-size="13" font-family="Liberation Sans" font-weight="700" fill="#fff" text-anchor="middle">N</text></svg></div>Send to<br>OneNote</div>
        </div>
      </div>

      <div class="rgroup g-tags d-flex flex-column">
        <div class="rbody d-flex">
          <div class="bigb w50 lower"><div class="ic"><svg width="30" height="32"><use href="#i-policy"/></svg></div>Assign<br><span>Policy <svg class="chev" width="8" height="5" stroke="#ddd"><use href="#c-down"/></svg></span></div>
          <div class="bigb w48 lower"><div class="ic"><svg width="30" height="30"><use href="#i-unread"/></svg></div>Unread/<br>Read</div>
          <div class="bigb w58 lower"><div class="ic"><svg width="30" height="30"><use href="#i-cat"/></svg></div>Categorize<svg class="mt-1" width="8" height="5" stroke="#ddd"><use href="#c-down"/></svg></div>
          <div class="bigb w48 lower"><div class="ic"><svg width="30" height="32"><use href="#i-flag"/></svg></div>Follow<br><span>Up <svg class="chev" width="8" height="5" stroke="#ddd"><use href="#c-down"/></svg></span></div>
        </div>
      </div>

      <div class="rgroup g-grp d-flex flex-column">
        <div class="browse d-flex align-items-center"><svg width="16" height="16"><use href="#i-people"/></svg>Browse Groups</div>
        <div class="rlabel grp-label">Groups</div>
      </div>

      <div class="rgroup g-find d-flex flex-column">
        <div class="rbody find-rows">
          <div class="ppl">Search People</div>
          <div><svg width="16" height="18"><use href="#i-book"/></svg>Address Book</div>
          <div><svg width="14" height="18"><use href="#i-filter"/></svg>Filter Email <svg class="chev" width="8" height="5" stroke="#ddd"><use href="#c-down"/></svg></div>
        </div>
        <div class="rlabel">Find</div>
      </div>

      <div class="rgroup g-speech d-flex flex-column">
        <div class="rbody d-flex">
          <div class="bigb wfull"><div class="ic"><svg width="32" height="34" viewBox="0 0 32 34" fill="none" overflow="visible"><text x="0" y="30" font-size="34" font-family="Inter" font-weight="200" fill="#d4d4d4" stroke="none">A</text><path d="M23 4c2 4 2 9 0 13M26 2c3 5 3 12 0 17M29 0c4 6 4 15 0 21" stroke="#2f8fdc" stroke-width="1.100"/></svg></div>Read<br>Aloud</div>
        </div>
        <div class="rlabel">Speech</div>
      </div>

      <div class="rgroup g-lang d-flex flex-column">
        <div class="rbody d-flex">
          <div class="bigb wfull"><div class="ic"><svg width="30" height="34" viewBox="0 0 30 34" overflow="visible"><text x="14" y="15" font-size="16" font-family="Noto Sans CJK JP" font-weight="700" fill="#2e8b3d">あ</text><text x="0" y="32" font-size="22" font-family="Liberation Sans" font-weight="700" fill="#1f7fd0">a</text><path d="M1 5h11v10H1l4-5z" fill="#1f7fd0"/><path d="M28 19v12H15l5-6z" fill="#2e8b3d"/></svg></div>Translate<svg class="mt-1" width="8" height="5" stroke="#ddd"><use href="#c-down"/></svg></div>
        </div>
        <div class="rlabel">Language</div>
      </div>

      <div class="rgroup g-addins d-flex flex-column">
        <div class="rbody d-flex">
          <div class="bigb wfull"><div class="ic"><svg width="32" height="36"><use href="#i-addins"/></svg></div>Get<br>Add-ins</div>
        </div>
        <div class="rlabel">Add-ins</div>
      </div>

      <div class="rgroup g-addin d-flex flex-column">
        <div class="rbody d-flex">
          <div class="bigb wfull"><div class="ic"><svg width="32" height="36"><use href="#i-viva"/></svg></div>Viva<br>Insights</div>
        </div>
        <div class="rlabel">Add-in</div>
      </div>

      <svg class="ribcollapse" width="12" height="7" viewBox="0 0 12 7" fill="none" stroke="#d0d0d0"><path d="M1 6l5-5 5 5"/></svg>
    </div>
    <div class="ribbon-lip"></div>
  </div>

  <div class="mainrow d-flex">
    <div class="sidebar d-flex flex-column">
      <div class="collapse-row d-flex align-items-center justify-content-end"><svg width="7" height="10" viewBox="0 0 7 10" fill="none" stroke="#e0e0e0" stroke-width="1.600"><path d="M6 1L2 5l4 4"/></svg></div>
      <div class="fav-row d-flex align-items-center"><svg width="10" height="6" viewBox="0 0 10 6" fill="none" stroke="#ddd"><path d="M1 1l4 4 4-4"/></svg>Favorites</div>
      <div class="blur1"></div>
      <div class="sidehr"></div>
      <div class="acct-row d-flex align-items-center"><svg width="10" height="6" viewBox="0 0 10 6" fill="none" stroke="#ddd"><path d="M1 1l4 4 4-4"/></svg><span>Jordan.Millama@ranche...</span></div>
      <div class="frow d-flex align-items-center"><span class="d-flex align-items-center"><svg width="6" height="10" viewBox="0 0 6 10" fill="none" stroke="#ddd"><path d="M1 1l4 4-4 4"/></svg>Inbox</span></div>
      <div class="frow d-flex align-items-center"><span>Drafts</span></div>
      <div class="frow d-flex align-items-center"><span>Sent Items</span></div>
      <div class="frow d-flex align-items-center"><span class="d-flex align-items-center"><svg width="6" height="10" viewBox="0 0 6 10" fill="none" stroke="#ddd"><path d="M1 1l4 4-4 4"/></svg>Deleted Items</span><span class="cnt">18101</span></div>
      <div class="frow d-flex align-items-center"><span>Archive</span></div>
      <div class="frow d-flex align-items-center"><span class="d-flex align-items-center"><svg width="6" height="10" viewBox="0 0 6 10" fill="none" stroke="#ddd"><path d="M1 1l4 4-4 4"/></svg>Conversation History</span></div>
      <div class="frow frow-on d-flex align-items-center"><span>Folder 1</span><span class="cnt">3</span></div>
      <div class="blur2"></div>
      <div class="adobe-row d-flex"><span>Adobe</span><span class="cnt">14</span></div>
      <div class="navbar-bottom d-flex">
        <div><svg width="20" height="15" viewBox="0 0 20 15"><rect x=".5" y=".5" width="17" height="13" fill="#b4d6fa" stroke="#0f78d4"/><path d="M1 1l8 6 8-6" fill="none" stroke="#0f78d4"/></svg></div>
        <div><svg width="18" height="18" viewBox="0 0 18 18" fill="none" stroke="#e4e4e4"><path d="M.5 1.500h17v16H.5zM.5 5h17M4 0v3M14 0v3"/><path d="M4 8h2M8 8h2M12 8h2M4 11h2M8 11h2M12 11h2M4 14h2M8 14h2" stroke-width="1.500"/></svg></div>
        <div><svg width="20" height="18" viewBox="0 0 20 18" fill="none" stroke="#e4e4e4"><circle cx="6" cy="8.500" r="3"/><circle cx="14" cy="4" r="3"/><path d="M1 18c0-4 2-6 5-6s5 2 5 6M10 9c1-1 2-2 4-2 3 0 5 1 5 4"/></svg></div>
        <div><svg width="15" height="18" viewBox="0 0 15 18" fill="none" stroke="#e4e4e4"><path d="M4 2H.5v15.500h14V2H11M4 .5h7v3H4zM4 11l2.500 3L11 7.500"/></svg></div>
        <div><svg width="20" height="4" viewBox="0 0 20 4" fill="#a8a8a8"><circle cx="2" cy="2" r="2"/><circle cx="10" cy="2" r="2"/><circle cx="18" cy="2" r="2"/></svg></div>
      </div>
    </div>

    <div class="msglist d-flex flex-column">
      <div class="listhead d-flex align-items-center">
        <span class="lt-all">All</span><span class="lt-unread">Unread</span><span class="lt-sort">By Date</span>
        <svg class="lt-caret" width="10" height="6" viewBox="0 0 10 6" fill="none" stroke="#ddd"><path d="M1 1l4 4 4-4"/></svg>
        <svg class="lt-up" width="9" height="12" viewBox="0 0 9 12" fill="none" stroke="#ddd"><path d="M4.500 12V1M1 4.500L4.500 1 8 4.500"/></svg>
      </div>
      <div class="today d-flex align-items-center"><svg width="10" height="6" viewBox="0 0 10 6" fill="none" stroke="#ddd"><path d="M1 1l4 4 4-4"/></svg>Today</div>
      <div class="mitem">
        <div class="mname">Jordan Millama</div>
        <div class="msub d-flex"><span>Montreal2</span><span class="mtime">3:52 PM</span></div>
        <div class="mblur mb1"></div>
      </div>
      <div class="mitem">
        <div class="mname">Jordan Millama</div>
        <div class="msub d-flex"><span>montreal-</span><span class="mtime">3:52 PM</span></div>
        <div class="mblur mb2"></div>
      </div>
      <div class="mitem mitem-on">
        <div class="mname">Jordan Millama</div>
        <div class="msub d-flex"><span>Montreal-000</span><span class="mtime">3:47 PM</span></div>
        <div class="mblur mb3"></div>
      </div>
    </div>

    <div class="reading">
      <div class="subject">Montreal-000</div>
      <div class="actions d-flex">
        <div class="actbtn actsq"><svg width="18" height="18" viewBox="0 0 18 18" fill="none" stroke="#b0b0b0"><circle cx="9" cy="9" r="3.500"/><path d="M9 1v3M9 14v3M1 9h3M14 9h3M3.300 3.300l2 2M12.700 12.700l2 2M3.300 14.700l2-2M12.700 5.300l2-2"/></svg></div>
        <div class="actbtn actgrp">
          <div class="ag-r"><svg width="18" height="18"><use href="#i-replysm"/></svg>Reply</div>
          <div class="ag-ra"><svg width="18" height="18" viewBox="0 0 20 20" fill="none" stroke="#cc66cc" stroke-width="1.200"><path d="M5 3L1 7l4 4M9 3L5 7l4 4M5 7h7c5 0 6 3 5 6-.6 2-2 3-4 3"/></svg>Reply All</div>
          <div class="ag-f"><svg width="18" height="18"><use href="#i-forwardsm"/></svg>Forward</div>
        </div>
        <div class="actbtn actsq"><svg width="20" height="20" viewBox="0 0 24 24"><circle cx="19" cy="5" r="2.400" fill="#7b83eb"/><circle cx="13" cy="4" r="3" fill="#5059c9"/><path d="M14 9h9v7a4 4 0 0 1-4 4h-2a4 4 0 0 1-3-2z" fill="#7b83eb"/><rect x="1" y="7" width="14" height="13" rx="1" fill="#4b53bc"/><text x="8" y="17.500" font-size="11" font-family="Liberation Sans" font-weight="700" fill="#fff" text-anchor="middle">T</text></svg></div>
        <div class="actbtn actsq"><svg width="16" height="4" viewBox="0 0 16 4" fill="#e0e0e0"><circle cx="2" cy="2" r="1.500"/><circle cx="8" cy="2" r="1.500"/><circle cx="14" cy="2" r="1.500"/></svg></div>
      </div>
      <div class="datel">Mon 1/30/2023 3:47 PM</div>
      <div class="strip st1"></div>
      <div class="strip st2"></div>
      <div class="rbar"></div>
    </div>
  </div>

  <div class="statusbar d-flex align-items-center">
    <span class="sb-items">Items: 3</span><span>Unread: 3</span>
    <span class="sb-up">All folders are up to date.</span><span class="sb-conn">Connected to: Microsoft Exchange</span>
    <div class="sb-view"><svg width="14" height="14" viewBox="0 0 14 14" fill="none" stroke="#e8e8e8"><path d="M.5.500h13v13H.5zM.5 3.500h13M4.500 3.500v10M9.500 3.500v10"/></svg></div>
    <div class="sb-read"><svg width="14" height="14" viewBox="0 0 14 14" fill="none" stroke="#d8d8d8"><path d="M.5 1l6.500 1 6.500-1v12L7 14 .5 13zM7 2v12M2.500 5h2.500M2.500 8h2.500M9 5h2.500M9 8h2.500"/></svg></div>
    <div class="sb-zoom d-flex align-items-center"><svg width="8" height="8" viewBox="0 0 8 8" stroke="#e4e4e4"><path d="M0 4h8"/></svg><div class="zline"><div class="zthumb"></div></div><svg width="9" height="9" viewBox="0 0 9 9" stroke="#e4e4e4"><path d="M0 4.500h9M4.500 0v9"/></svg></div>
    <span class="sb-pct">100%</span>
  </div>

  <!-- menu, tooltip and dialog windows float over the panes -->
  <div class="rules-menu">
    <div class="mi mi-a">Always Move Messages From: Jordan Millama</div>
    <div class="mi mi-b"><svg width="16" height="16"><use href="#i-rules"/></svg><span>Create R<u>u</u>le...</span></div>
    <div class="mi mi-c"><svg width="16" height="16" viewBox="0 0 16 16" fill="none"><circle cx="4" cy="5" r="3" stroke="#3a8fd8" stroke-width="1.500"/><path d="M3 13c2 0 2-1 2-4 0-3 2-5 4-5s4 2 4 5c0 3 0 4 2 4zM7.500 14.500h3" stroke="#cfcfcf"/></svg><span>Manage Ru<u>l</u>es &amp; Alerts...</span></div>
  </div>

  <div class="tip">
    <b>Manage Rules &amp; Alerts</b>
    <p>Manage rules and alerts.</p>
    <p>Rules make it possible to automatically take action based on the contents of a message.</p>
  </div>

  <div class="dlg rulesdlg">
    <div class="dlg-title d-flex align-items-center"><span></span><svg width="12" height="12" viewBox="0 0 12 12" stroke="#8a8a8a"><path d="M.5.500l11 11M11.500.5l-11 11"/></svg></div>
    <div class="rd-panel">
      <div class="rd-tools d-flex"><span class="rd-run">Run Rules Now...</span><span><u>O</u>ptions</span></div>
      <div class="rulelist d-flex">
        <div class="rl-main">
          <div class="rl-head">Actions</div>
          <div class="rl-row rl-sel"><svg width="16" height="16"><use href="#i-movesm"/></svg></div>
          <div class="rl-row"><svg width="16" height="16"><use href="#i-movesm"/></svg><svg class="rl-tool" width="14" height="16"><use href="#i-wrench"/></svg></div>
          <div class="rl-row"><svg width="16" height="16"><use href="#i-movesm"/></svg><svg class="rl-tool" width="14" height="16"><use href="#i-wrench"/></svg></div>
          <div class="rl-row"><svg width="16" height="16"><use href="#i-movesm"/></svg><svg class="rl-tool" width="14" height="16"><use href="#i-wrench"/></svg></div>
          <div class="rl-row"><svg width="16" height="16"><use href="#i-movesm"/></svg><svg class="rl-tool" width="14" height="16"><use href="#i-wrench"/></svg></div>
          <div class="rl-row"><svg width="16" height="16"><use href="#i-movesm"/></svg><svg class="rl-tool" width="14" height="16"><use href="#i-wrench"/></svg></div>
          <div class="rl-row"><svg width="16" height="16"><use href="#i-movesm"/></svg><svg class="rl-tool" width="14" height="16"><use href="#i-wrench"/></svg></div>
        </div>
        <div class="scrollb">
          <div class="sb-arrow"><svg width="9" height="6" viewBox="0 0 8 5" fill="none" stroke="#444" stroke-width="1.400"><path d="M1 4l3-3 3 3"/></svg></div>
          <div class="thumb-b"></div>
          <div class="mt-auto sb-arrow"><svg width="9" height="6" viewBox="0 0 8 5" fill="none" stroke="#444" stroke-width="1.400"><path d="M1 1l3 3 3-3"/></svg></div>
        </div>
      </div>
      <div class="rd-lab">Rule description (click an underlined value to edit):</div>
      <div class="descbox rd-desc">
        <div>Apply this rule after the message arrives</div>
        <div>with <a href="#">Montreal</a> in the subject</div>
        <div>move it to the <a href="#">Folder 1</a> folder</div>
      </div>
      <div class="rd-check d-flex align-items-center"><div class="tick"></div>Enable rules on all messages downloaded from RSS Feeds</div>
    </div>
    <div class="rd-btns d-flex">
      <button class="btn wbtn wbtn-b">OK</button>
      <button class="btn wbtn wbtn-b gap9">Cancel</button>
      <button class="btn wbtn wbtn-b wbtn-off gap9">Apply</button>
    </div>
  </div>

  <div class="dlg wizard">
    <div class="dlg-title d-flex align-items-center"><span>Rules Wizard</span><svg width="12" height="12" viewBox="0 0 12 12" stroke="#222"><path d="M.5.500l11 11M11.500.5l-11 11"/></svg></div>
    <div class="wiz-body">
      <div class="lh16">Which condition(s) do you want to check?</div>
      <div class="lh16">Step 1: Select condition(s)</div>
      <div class="condbox d-flex">
        <div class="condrows">
          <div class="cond cond-on"><div class="tick"><svg width="11" height="11" viewBox="0 0 11 11" fill="none" stroke="#000" stroke-width="2"><path d="M1.500 5.500l3 3.500 5-7.500"/></svg></div><span>with <a href="#">specific words</a> in the subject</span></div>
          <div class="cond"><div class="tick"></div><span>from <a href="#">people or public group</a></span></div>
          <div class="cond"><div class="tick"></div><span>through the <a href="#">specified</a> account</span></div>
          <div class="cond"><div class="tick"></div><span>sent only to me</span></div>
          <div class="cond"><div class="tick"></div><span>where my name is in the To box</span></div>
          <div class="cond"><div class="tick"></div><span>marked as <a href="#">importance</a></span></div>
          <div class="cond"><div class="tick"></div><span>marked as <a href="#">sensitivity</a></span></div>
          <div class="cond"><div class="tick"></div><span>flagged for <a href="#">action</a></span></div>
          <div class="cond"><div class="tick"></div><span>where my name is in the Cc box</span></div>
          <div class="cond"><div class="tick"></div><span>where my name is in the To or Cc box</span></div>
          <div class="cond"><div class="tick"></div><span>where my name is not in the To box</span></div>
          <div class="cond"><div class="tick"></div><span>sent to <a href="#">people or public group</a></span></div>
          <div class="cond"><div class="tick"></div><span>with <a href="#">specific words</a> in the body</span></div>
          <div class="cond"><div class="tick"></div><span>with <a href="#">specific words</a> in the subject or body</span></div>
          <div class="cond"><div class="tick"></div><span>with <a href="#">specific words</a> in the message header</span></div>
          <div class="cond"><div class="tick"></div><span>with <a href="#">specific words</a> in the recipient's address</span></div>
          <div class="cond"><div class="tick"></div><span>with <a href="#">specific words</a> in the sender's address</span></div>
          <div class="cond"><div class="tick"></div><span>assigned to <a href="#">category</a> category</span></div>
        </div>
        <div class="scrollb">
          <div class="sb-arrow"><svg width="9" height="6" viewBox="0 0 8 5" fill="none" stroke="#555" stroke-width="1.400"><path d="M1 4l3-3 3 3"/></svg></div>
          <div class="thumb-a"></div>
          <div class="mt-auto sb-arrow"><svg width="9" height="6" viewBox="0 0 8 5" fill="none" stroke="#555" stroke-width="1.400"><path d="M1 1l3 3 3-3"/></svg></div>
        </div>
      </div>
      <div class="lh16 mt-2">Step 2: Edit the rule description (click an underlined value)</div>
      <div class="descbox mt-1px">
        <div>Apply this rule after the message arrives</div>
        <div>with <a href="#">Montreal</a> in the subject</div>
        <div>move it to the <a href="#">Folder 1</a> folder</div>
      </div>
      <div class="wiz-sep"></div>
      <div class="btnrow d-flex">
        <button class="btn wbtn">Cancel</button>
        <button class="btn wbtn wbtn-off gap13">&lt; Back</button>
        <button class="btn wbtn wbtn-def gap2">Next &gt;</button>
        <button class="btn wbtn gap13">Finish</button>
      </div>
    </div>
  </div>

  <!-- red rings drawn on the screenshot -->
  <svg class="rings" width="480" height="600" fill="none" stroke="#e8373c" stroke-width="3">
    <ellipse cx="311" cy="257" rx="68" ry="29"/>
    <ellipse cx="310" cy="357" rx="69" ry="27" transform="rotate(1 310 357)"/>
    <ellipse cx="309" cy="456" rx="67" ry="23"/>
    <ellipse cx="113" cy="527" rx="104" ry="33" transform="rotate(1 113 527)"/>
  </svg>

  <div class="speck speck1"></div><div class="speck speck2"></div>
  <svg class="mouse" width="12" height="20" viewBox="0 0 12 20"><path d="M1 1v15l3.500-3.500 2.500 6 2.500-1-2.500-6H11z" fill="#fff" stroke="#000" stroke-width=".8"/></svg>
</div>

<script src="https://cdn.jsdelivr.net/npm/bootstrap@5.3.0/dist/js/bootstrap.bundle.min.js"></script>
</body>
</html>
